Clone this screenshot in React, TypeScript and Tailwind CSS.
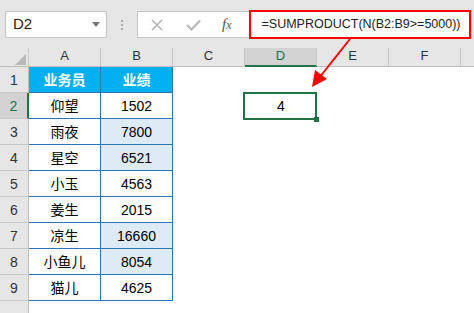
import React from 'react';

const rows = [
  { n: 1, a: '业务员', b: '业绩', head: true },
  { n: 2, a: '仰望', b: '1502' },
  { n: 3, a: '雨夜', b: '7800', hi: true },
  { n: 4, a: '星空', b: '6521', hi: true },
  { n: 5, a: '小玉', b: '4563' },
  { n: 6, a: '姜生', b: '2015' },
  { n: 7, a: '凉生', b: '16660', hi: true },
  { n: 8, a: '小鱼儿', b: '8054', hi: true },
  { n: 9, a: '猫儿', b: '4625' },
];

const cjk = "font-['Liberation_Sans','Noto_Sans_CJK_SC',sans-serif]";

function RowHeader({ n, active }: { n?: number; active?: boolean }) {
  return (
    <div
      className={
        active
          ? 'w-[29px] shrink-0 bg-[#d2d2d2] border-r-2 border-r-[#217346] border-b border-b-[#c8c8c8] flex items-end justify-center pb-[1px] text-[14px] text-[#217346]'
          : 'w-[29px] shrink-0 bg-[#e6e6e6] border-r border-r-[#bdbdbd] border-b border-b-[#c8c8c8] flex items-end justify-center pb-[1px] text-[14px] text-[#333]'
      }
    >
      {n}
    </div>
  );
}

export default function App() {
  return (
    <div className={`relative w-[474px] h-[313px] overflow-hidden bg-white ${cjk}`}>
      {/* formula bar */}
      <div className="h-[48px] bg-[#e6e6e6] flex items-start pt-[11px] pl-[5px] pr-[2px]">
        <div className="w-[102px] h-[27px] bg-white border border-[#c6c6c6] flex items-center justify-between pl-[7px] pr-[6px]">
          <span className="text-[15px] text-[#222]">D2</span>
          <svg width="8" height="5" viewBox="0 0 8 5">
            <path d="M0 0 L8 0 L4 5 Z" fill="#7a7a7a" />
          </svg>
        </div>
        <div className="w-[30px] h-[27px] flex flex-col items-center justify-center gap-[2px]">
          <span className="w-[2px] h-[2px] bg-[#a8a8a8]" />
          <span className="w-[2px] h-[2px] bg-[#a8a8a8]" />
          <span className="w-[2px] h-[2px] bg-[#a8a8a8]" />
        </div>
        <div className="flex-1 h-[27px] bg-white border border-[#c6c6c6] flex items-center">
          <svg className="ml-[13px]" width="12" height="12" viewBox="0 0 12 12">
            <path d="M1 1 L11 11 M11 1 L1 11" stroke="#b5b5b5" strokeWidth="1.6" />
          </svg>
          <svg className="ml-[23px]" width="15" height="12" viewBox="0 0 15 12">
            <path d="M1 6 L5.5 10.5 L14 1.5" stroke="#b5b5b5" strokeWidth="2" fill="none" />
          </svg>
          <span className="ml-[21px] font-['Liberation_Serif',serif] italic text-[15px] text-[#555] leading-none">
            f<span className="text-[12px]">x</span>
          </span>
          <div className="ml-[17px] flex-1 h-[29px] -my-[1px] border-2 border-[#ff0000] flex items-center pl-[11px] text-[12.5px] text-[#222]">
            =SUMPRODUCT(N(B2:B9&gt;=5000))
          </div>
        </div>
      </div>

      {/* column headers */}
      <div className="h-[19px] flex bg-[#e6e6e6] border-b border-b-[#bdbdbd] text-[13px] text-[#333]">
        <div className="w-[29px] shrink-0 border-r border-r-[#c8c8c8] flex items-end justify-end pr-[2px] pb-[1px]">
          <svg width="11" height="11" viewBox="0 0 11 11">
            <path d="M11 0 L11 11 L0 11 Z" fill="#b9b9b9" />
          </svg>
        </div>
        {['A', 'B', 'C', 'D', 'E', 'F'].map((c) =>
          c === 'D' ? (
            <div
              key={c}
              className="w-[72px] shrink-0 bg-[#d2d2d2] border-r border-r-[#c8c8c8] border-b-2 border-b-[#217346] -mb-[1px] flex items-end justify-center text-[#217346]"
            >
              {c}
            </div>
          ) : (
            <div key={c} className="w-[72px] shrink-0 border-r border-r-[#c8c8c8] flex items-end justify-center pb-[1px]">
              {c}
            </div>
          )
        )}
        <div className="flex-1" />
      </div>

      {/* grid rows */}
      {rows.map((r) => (
        <div key={r.n} className="h-[26px] flex">
          <RowHeader n={r.n} active={r.n === 2} />
          <div
            className={
              r.head
                ? 'w-[72px] shrink-0 bg-[#00b0f0] border-r border-b border-[#2e75b6] flex items-center justify-center pt-[1px] text-[14px] font-bold text-white'
                : 'w-[72px] shrink-0 border-r border-b border-[#2e75b6] flex items-center justify-center pt-[2px] text-[14px] text-black'
            }
          >
            {r.a}
          </div>
          <div
            className={
              r.head
                ? 'w-[72px] shrink-0 bg-[#00b0f0] border-r border-b border-[#2e75b6] flex items-center justify-center pt-[1px] text-[14px] font-bold text-white'
                : r.hi
                ? 'w-[72px] shrink-0 bg-[#ddebf7] border-r border-b border-[#2e75b6] flex items-center justify-center pt-[2px] text-[14px] text-black'
                : 'w-[72px] shrink-0 border-r border-b border-[#2e75b6] flex items-center justify-center pt-[2px] text-[14px] text-black'
            }
          >
            {r.b}
          </div>
          <div className="w-[72px] shrink-0" />
          <div className="w-[72px] shrink-0 relative flex items-center justify-center pt-[1px] text-[14px] text-black">
            {r.n === 2 && (
              <>
                <span>4</span>
                <div className="absolute -top-[1px] -bottom-[1px] -left-[2px] right-0 border-2 border-[#217346]" />
                <div className="absolute -right-[2px] -bottom-[3px] w-[5px] h-[5px] bg-[#217346]" />
              </>
            )}
          </div>
          <div className="flex-1" />
        </div>
      ))}
      <div className="h-[20px] flex">
        <RowHeader />
        <div className="flex-1" />
      </div>

      {/* red arrow annotation */}
      <svg className="absolute left-0 top-0 pointer-events-none" width="474" height="313" viewBox="0 0 474 313">
        <line x1="350" y1="39" x2="319" y2="78" stroke="#ff0000" strokeWidth="2" />
        <polygon points="312,87 315,70 327,79" fill="#ff0000" />
      </svg>
    </div>
  );
}
